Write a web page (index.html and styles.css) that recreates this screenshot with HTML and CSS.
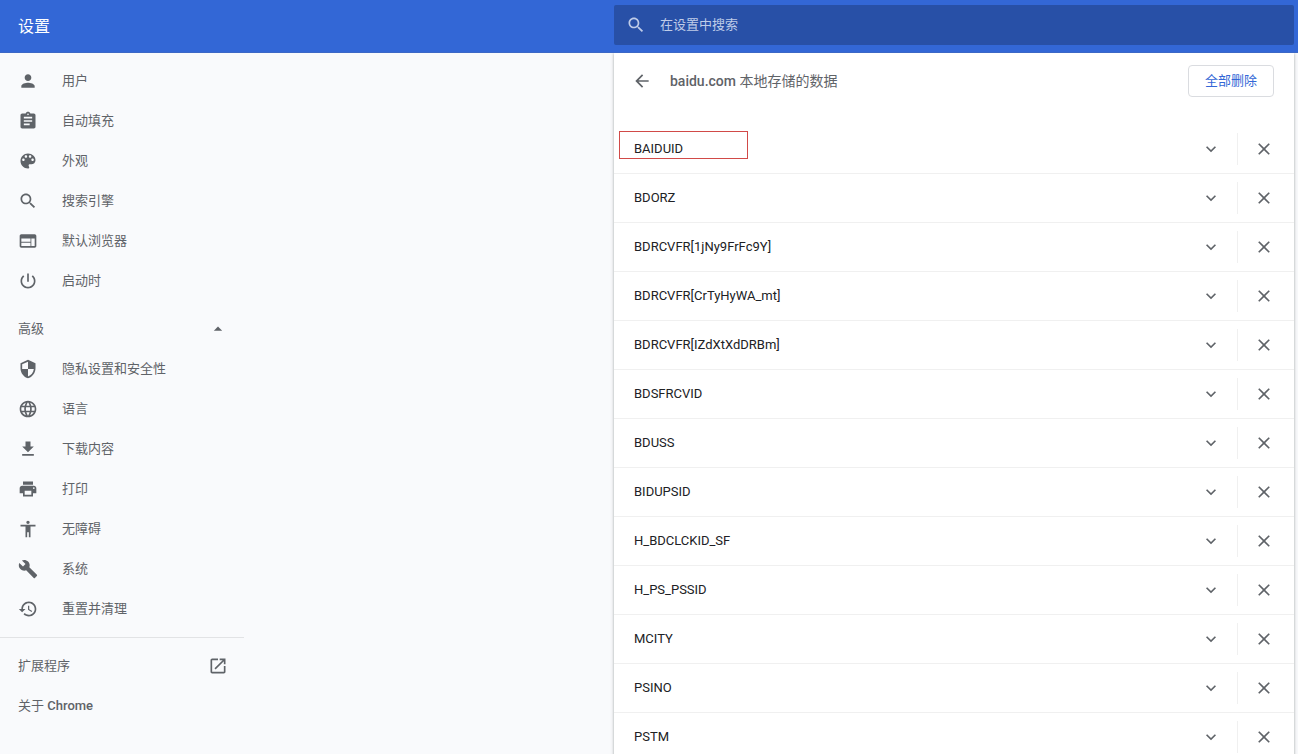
FILE: index.html
```html
<!DOCTYPE html>
<html lang="zh-CN">
<head>
<meta charset="utf-8">
<title>设置</title>
<link rel="stylesheet" href="styles.css">
</head>
<body>
<svg class="sprite" aria-hidden="true">
  <symbol id="i-person" viewBox="0 0 24 24"><path d="M12 12c2.21 0 4-1.79 4-4s-1.79-4-4-4-4 1.790-4 4 1.790 4 4 4zm0 2c-2.670 0-8 1.340-8 4v2h16v-2c0-2.660-5.330-4-8-4z"/></symbol>
  <symbol id="i-assignment" viewBox="0 0 24 24"><path d="M19 3h-4.180C14.400 1.840 13.300 1 12 1s-2.400.84-2.820 2H5c-1.100 0-2 .9-2 2v14c0 1.100.9 2 2 2h14c1.100 0 2-.9 2-2V5c0-1.100-.9-2-2-2zm-7 0c.55 0 1 .45 1 1s-.45 1-1 1-1-.45-1-1 .45-1 1-1zm2 14H7v-2h7v2zm3-4H7v-2h10v2zm0-4H7V7h10v2z"/></symbol>
  <symbol id="i-palette" viewBox="0 0 24 24"><path d="M12 3c-4.970 0-9 4.030-9 9s4.030 9 9 9c.83 0 1.500-.67 1.500-1.500 0-.39-.15-.74-.39-1.010-.23-.26-.38-.61-.38-.99 0-.83.67-1.500 1.500-1.500H16c2.760 0 5-2.240 5-5 0-4.420-4.030-8-9-8zm-5.500 9c-.83 0-1.500-.67-1.500-1.500S5.670 9 6.500 9 8 9.670 8 10.500 7.330 12 6.500 12zm3-4C8.670 8 8 7.330 8 6.500S8.670 5 9.500 5s1.500.67 1.500 1.500S10.330 8 9.500 8zm5 0c-.83 0-1.500-.67-1.500-1.500S13.670 5 14.500 5s1.500.67 1.500 1.500S15.330 8 14.500 8zm3 4c-.83 0-1.500-.67-1.500-1.500S16.670 9 17.500 9s1.500.67 1.500 1.500-.67 1.500-1.500 1.500z"/></symbol>
  <symbol id="i-search" viewBox="0 0 24 24"><path d="M15.500 14h-.79l-.28-.27C15.410 12.590 16 11.110 16 9.500 16 5.910 13.090 3 9.500 3S3 5.910 3 9.500 5.910 16 9.500 16c1.610 0 3.090-.59 4.230-1.570l.27.28v.79l5 4.990L20.490 19l-4.990-5zm-6 0C7.010 14 5 11.990 5 9.500S7.010 5 9.500 5 14 7.010 14 9.500 11.990 14 9.500 14z"/></symbol>
  <symbol id="i-web" viewBox="0 0 24 24"><path d="M20 4H4c-1.100 0-1.990.9-1.990 2L2 18c0 1.100.9 2 2 2h16c1.100 0 2-.9 2-2V6c0-1.100-.9-2-2-2zm-5 14H4v-4h11v4zm0-5H4V9h11v4zm5 5h-4V9h4v9z"/></symbol>
  <symbol id="i-power" viewBox="0 0 24 24"><path d="M13 3h-2v10h2V3zm4.830 2.170l-1.420 1.420C17.990 7.860 19 9.810 19 12c0 3.870-3.130 7-7 7s-7-3.130-7-7c0-2.190 1.010-4.140 2.580-5.420L6.170 5.170C4.230 6.820 3 9.260 3 12c0 4.970 4.030 9 9 9s9-4.030 9-9c0-2.740-1.230-5.180-3.170-6.830z"/></symbol>
  <symbol id="i-up" viewBox="0 0 24 24"><path d="M7 14l5-5 5 5z"/></symbol>
  <symbol id="i-shield" viewBox="0 0 24 24"><path d="M12 1L3 5v6c0 5.550 3.840 10.740 9 12 5.160-1.260 9-6.450 9-12V5l-9-4zm0 10.990h7c-.53 4.120-3.280 7.790-7 8.940V12H5V6.300l7-3.110v8.800z"/></symbol>
  <symbol id="i-globe" viewBox="0 0 24 24"><path d="M11.990 2C6.470 2 2 6.480 2 12s4.470 10 9.990 10C17.520 22 22 17.520 22 12S17.520 2 11.990 2zm6.930 6h-2.950c-.32-1.250-.78-2.450-1.380-3.560 1.840.63 3.370 1.910 4.330 3.560zM12 4.040c.83 1.200 1.480 2.530 1.910 3.960h-3.820c.43-1.430 1.080-2.760 1.910-3.960zM4.260 14C4.100 13.360 4 12.690 4 12s.1-1.360.26-2h3.380c-.08.66-.14 1.320-.14 2s.06 1.340.14 2H4.260zm.82 2h2.950c.32 1.250.78 2.450 1.380 3.560-1.840-.63-3.370-1.900-4.330-3.560zm2.950-8H5.080c.96-1.660 2.490-2.930 4.330-3.560C8.810 5.550 8.350 6.750 8.030 8zM12 19.960c-.83-1.200-1.480-2.530-1.910-3.960h3.820c-.43 1.430-1.080 2.760-1.910 3.960zM14.340 14H9.660c-.09-.66-.16-1.320-.16-2s.07-1.350.16-2h4.680c.09.65.16 1.320.16 2s-.07 1.340-.16 2zm.25 5.560c.6-1.110 1.060-2.310 1.380-3.560h2.950c-.96 1.650-2.490 2.930-4.330 3.560zM16.360 14c.08-.66.14-1.320.14-2s-.06-1.340-.14-2h3.380c.16.64.26 1.310.26 2s-.1 1.360-.26 2h-3.380z"/></symbol>
  <symbol id="i-download" viewBox="0 0 24 24"><path d="M19 9h-4V3H9v6H5l7 7 7-7zM5 18v2h14v-2H5z"/></symbol>
  <symbol id="i-print" viewBox="0 0 24 24"><path d="M19 8H5c-1.660 0-3 1.340-3 3v6h4v4h12v-4h4v-6c0-1.660-1.340-3-3-3zm-3 11H8v-5h8v5zm3-7c-.55 0-1-.45-1-1s.45-1 1-1 1 .45 1 1-.45 1-1 1zm-1-9H6v4h12V3z"/></symbol>
  <symbol id="i-access" viewBox="0 0 24 24"><path d="M12 2c1.100 0 2 .9 2 2s-.9 2-2 2-2-.9-2-2 .9-2 2-2zm9 7h-6v13h-2v-6h-2v6H9V9H3V7h18v2z"/></symbol>
  <symbol id="i-wrench" viewBox="0 0 24 24"><path d="M22.700 19l-9.100-9.100c.9-2.300.4-5-1.500-6.900-2-2-5-2.400-7.400-1.300L9 6 6 9 1.600 4.700C.4 7.100.9 10.100 2.900 12.100c1.900 1.900 4.600 2.400 6.900 1.500l9.100 9.100c.4.4 1 .4 1.400 0l2.300-2.300c.5-.4.5-1.100.1-1.400z"/></symbol>
  <symbol id="i-restore" viewBox="0 0 24 24"><path d="M13 3c-4.970 0-9 4.030-9 9H1l3.890 3.890.07.14L9 12H6c0-3.870 3.130-7 7-7s7 3.130 7 7-3.130 7-7 7c-1.930 0-3.680-.79-4.940-2.060l-1.420 1.420C8.270 19.990 10.510 21 13 21c4.970 0 9-4.030 9-9s-4.030-9-9-9zm-1 5v5l4.280 2.540.72-1.210-3.500-2.080V8H12z"/></symbol>
  <symbol id="i-open" viewBox="0 0 24 24"><path d="M19 19H5V5h7V3H5c-1.110 0-2 .9-2 2v14c0 1.100.89 2 2 2h14c1.100 0 2-.9 2-2v-7h-2v7zM14 3v2h3.590l-9.830 9.830 1.410 1.410L19 6.410V10h2V3h-7z"/></symbol>
  <symbol id="i-back" viewBox="0 0 24 24"><path d="M20 11H7.830l5.590-5.590L12 4l-8 8 8 8 1.410-1.410L7.830 13H20v-2z"/></symbol>
  <symbol id="i-expand" viewBox="0 0 24 24"><path d="M16.590 8.590L12 13.170 7.410 8.590 6 10l6 6 6-6z"/></symbol>
  <symbol id="i-close" viewBox="0 0 24 24"><path d="M19 6.410L17.590 5 12 10.590 6.410 5 5 6.410 10.590 12 5 17.590 6.410 19 12 13.410 17.590 19 19 17.590 13.410 12z"/></symbol>
</svg>

<div class="app">
  <header class="toolbar">
    <h1 class="toolbar-title">设置</h1>
    <label class="search">
      <svg class="icon"><use href="#i-search"/></svg>
      <input class="search-input" type="search" placeholder="在设置中搜索" aria-label="在设置中搜索">
    </label>
  </header>

  <div class="content">
    <nav class="menu">
      <a class="menu-item" href="#people"><svg class="icon"><use href="#i-person"/></svg><span>用户</span></a>
      <a class="menu-item" href="#autofill"><svg class="icon"><use href="#i-assignment"/></svg><span>自动填充</span></a>
      <a class="menu-item" href="#appearance"><svg class="icon"><use href="#i-palette"/></svg><span>外观</span></a>
      <a class="menu-item" href="#search"><svg class="icon"><use href="#i-search"/></svg><span>搜索引擎</span></a>
      <a class="menu-item" href="#browser"><svg class="icon"><use href="#i-web"/></svg><span>默认浏览器</span></a>
      <a class="menu-item" href="#startup"><svg class="icon"><use href="#i-power"/></svg><span>启动时</span></a>
      <button class="menu-item menu-toggle" type="button" aria-expanded="true"><span>高级</span><svg class="icon"><use href="#i-up"/></svg></button>
      <a class="menu-item" href="#privacy"><svg class="icon"><use href="#i-shield"/></svg><span>隐私设置和安全性</span></a>
      <a class="menu-item" href="#languages"><svg class="icon"><use href="#i-globe"/></svg><span>语言</span></a>
      <a class="menu-item" href="#downloads"><svg class="icon"><use href="#i-download"/></svg><span>下载内容</span></a>
      <a class="menu-item" href="#printing"><svg class="icon"><use href="#i-print"/></svg><span>打印</span></a>
      <a class="menu-item" href="#accessibility"><svg class="icon"><use href="#i-access"/></svg><span>无障碍</span></a>
      <a class="menu-item" href="#system"><svg class="icon"><use href="#i-wrench"/></svg><span>系统</span></a>
      <a class="menu-item" href="#reset"><svg class="icon"><use href="#i-restore"/></svg><span>重置并清理</span></a>
      <hr class="menu-separator">
      <a class="menu-item menu-spread" href="#extensions"><span>扩展程序</span><svg class="icon"><use href="#i-open"/></svg></a>
      <a class="menu-item" href="#about"><span>关于 <span class="latin">Chrome</span></span></a>
    </nav>

    <main class="card">
      <div class="card-header">
        <button class="icon-button back" type="button" aria-label="返回"><svg class="icon"><use href="#i-back"/></svg></button>
        <h2 class="card-title"><span class="latin">baidu.com</span> 本地存储的数据</h2>
        <button class="outline-button" type="button">全部删除</button>
      </div>
      <ul class="cookies">
        <li class="cookie marked"><span class="cookie-name">BAIDUID</span><button class="icon-button" type="button" aria-label="展开"><svg class="icon"><use href="#i-expand"/></svg></button><span class="divider"></span><button class="icon-button" type="button" aria-label="删除"><svg class="icon"><use href="#i-close"/></svg></button></li>
        <li class="cookie"><span class="cookie-name">BDORZ</span><button class="icon-button" type="button" aria-label="展开"><svg class="icon"><use href="#i-expand"/></svg></button><span class="divider"></span><button class="icon-button" type="button" aria-label="删除"><svg class="icon"><use href="#i-close"/></svg></button></li>
        <li class="cookie"><span class="cookie-name">BDRCVFR[1jNy9FrFc9Y]</span><button class="icon-button" type="button" aria-label="展开"><svg class="icon"><use href="#i-expand"/></svg></button><span class="divider"></span><button class="icon-button" type="button" aria-label="删除"><svg class="icon"><use href="#i-close"/></svg></button></li>
        <li class="cookie"><span class="cookie-name">BDRCVFR[CrTyHyWA_mt]</span><button class="icon-button" type="button" aria-label="展开"><svg class="icon"><use href="#i-expand"/></svg></button><span class="divider"></span><button class="icon-button" type="button" aria-label="删除"><svg class="icon"><use href="#i-close"/></svg></button></li>
        <li class="cookie"><span class="cookie-name">BDRCVFR[IZdXtXdDRBm]</span><button class="icon-button" type="button" aria-label="展开"><svg class="icon"><use href="#i-expand"/></svg></button><span class="divider"></span><button class="icon-button" type="button" aria-label="删除"><svg class="icon"><use href="#i-close"/></svg></button></li>
        <li class="cookie"><span class="cookie-name">BDSFRCVID</span><button class="icon-button" type="button" aria-label="展开"><svg class="icon"><use href="#i-expand"/></svg></button><span class="divider"></span><button class="icon-button" type="button" aria-label="删除"><svg class="icon"><use href="#i-close"/></svg></button></li>
        <li class="cookie"><span class="cookie-name">BDUSS</span><button class="icon-button" type="button" aria-label="展开"><svg class="icon"><use href="#i-expand"/></svg></button><span class="divider"></span><button class="icon-button" type="button" aria-label="删除"><svg class="icon"><use href="#i-close"/></svg></button></li>
        <li class="cookie"><span class="cookie-name">BIDUPSID</span><button class="icon-button" type="button" aria-label="展开"><svg class="icon"><use href="#i-expand"/></svg></button><span class="divider"></span><button class="icon-button" type="button" aria-label="删除"><svg class="icon"><use href="#i-close"/></svg></button></li>
        <li class="cookie"><span class="cookie-name">H_BDCLCKID_SF</span><button class="icon-button" type="button" aria-label="展开"><svg class="icon"><use href="#i-expand"/></svg></button><span class="divider"></span><button class="icon-button" type="button" aria-label="删除"><svg class="icon"><use href="#i-close"/></svg></button></li>
        <li class="cookie"><span class="cookie-name">H_PS_PSSID</span><button class="icon-button" type="button" aria-label="展开"><svg class="icon"><use href="#i-expand"/></svg></button><span class="divider"></span><button class="icon-button" type="button" aria-label="删除"><svg class="icon"><use href="#i-close"/></svg></button></li>
        <li class="cookie"><span class="cookie-name">MCITY</span><button class="icon-button" type="button" aria-label="展开"><svg class="icon"><use href="#i-expand"/></svg></button><span class="divider"></span><button class="icon-button" type="button" aria-label="删除"><svg class="icon"><use href="#i-close"/></svg></button></li>
        <li class="cookie"><span class="cookie-name">PSINO</span><button class="icon-button" type="button" aria-label="展开"><svg class="icon"><use href="#i-expand"/></svg></button><span class="divider"></span><button class="icon-button" type="button" aria-label="删除"><svg class="icon"><use href="#i-close"/></svg></button></li>
        <li class="cookie"><span class="cookie-name">PSTM</span><button class="icon-button" type="button" aria-label="展开"><svg class="icon"><use href="#i-expand"/></svg></button><span class="divider"></span><button class="icon-button" type="button" aria-label="删除"><svg class="icon"><use href="#i-close"/></svg></button></li>
      </ul>
    </main>
  </div>
</div>
</body>
</html>
```

FILE: styles.css
```css
*,
*::before {
  box-sizing: border-box;
}

body {
  margin: 0;
  background: #f9fafc;
  color: #202124;
  font-family: Roboto, "Noto Sans CJK SC", sans-serif;
  font-size: 13px;
  line-height: 20px;
}

button,
input {
  font: inherit;
}

button {
  margin: 0;
  padding: 0;
  border: 0;
  background: none;
  color: inherit;
  cursor: pointer;
}

.sprite {
  display: none;
}

.icon {
  display: block;
  flex: none;
  width: 20px;
  height: 20px;
  fill: currentColor;
}

.latin {
  font-weight: 500;
}

.app {
  display: flex;
  flex-direction: column;
  height: 100vh;
}

/* Toolbar */
.toolbar {
  display: flex;
  flex: none;
  align-items: center;
  justify-content: space-between;
  padding: 5px 4px 7px 18px;
  border-bottom: 1px solid #3c68c6;
  background: #3367d6;
  color: #fff;
}

.toolbar-title {
  margin: 0;
  padding-top: 4px;
  font-size: 16px;
  font-weight: 400;
  line-height: 24px;
}

.search {
  display: flex;
  flex: 0 1 680px;
  align-items: center;
  gap: 14px;
  height: 40px;
  padding: 0 12px;
  border-radius: 2px;
  background: #2850a7;
  color: #bfcce8;
}

.search-input {
  flex: 1;
  min-width: 0;
  padding: 0;
  border: 0;
  outline: 0;
  background: none;
  color: #fff;
}

.search-input::placeholder {
  color: #bfcce8;
}

/* Page body */
.content {
  display: flex;
  flex: 1;
  justify-content: space-between;
  min-height: 0;
  padding-right: 4px;
  overflow-x: hidden;
  overflow-y: auto;
  scrollbar-width: none;
}

/* Side menu */
.menu {
  flex: 0 0 244px;
  padding-top: 8px;
  color: #5f6368;
}

.menu-item {
  display: flex;
  align-items: center;
  gap: 24px;
  width: 100%;
  height: 40px;
  padding: 0 16px 0 18px;
  color: inherit;
  text-decoration: none;
}

.menu-toggle {
  justify-content: space-between;
  margin-top: 8px;
}

.menu-spread {
  justify-content: space-between;
}

.menu-separator {
  height: 1px;
  margin: 8px 0;
  border: 0;
  background: #e2e3e5;
}

/* Card */
.card {
  flex: 0 1 680px;
  align-self: flex-start;
  background: #fff;
  box-shadow: 0 1px 2px rgba(60, 64, 67, 0.3), 0 1px 3px 1px rgba(60, 64, 67, 0.15);
}

.card-header {
  display: flex;
  align-items: center;
  height: 56px;
  padding: 0 20px 0 10px;
  color: #5f6368;
}

.card-title {
  flex: 1;
  margin: 0 0 0 10px;
  font-size: 14px;
  font-weight: 400;
}

.outline-button {
  height: 32px;
  padding: 0 16px;
  border: 1px solid #dadce0;
  border-radius: 4px;
  color: #3367d6;
}

.icon-button {
  display: grid;
  flex: none;
  place-items: center;
  width: 36px;
  height: 36px;
  color: #5f6368;
}

.cookies {
  margin: 0;
  padding: 16px 0 0;
  list-style: none;
}

.cookie {
  position: relative;
  display: flex;
  align-items: center;
  height: 49px;
  padding: 0 12px 0 20px;
  border-bottom: 1px solid #f0f0f0;
}

.cookie-name {
  flex: 1;
}

.divider {
  width: 1px;
  height: 32px;
  margin: 0 8px;
  background: #f0f0f0;
}

/* Highlight frame drawn over the first entry */
.marked::before {
  content: "";
  position: absolute;
  top: 6px;
  left: 5px;
  width: 129px;
  height: 28px;
  border: 1px solid #d14a48;
}
```
